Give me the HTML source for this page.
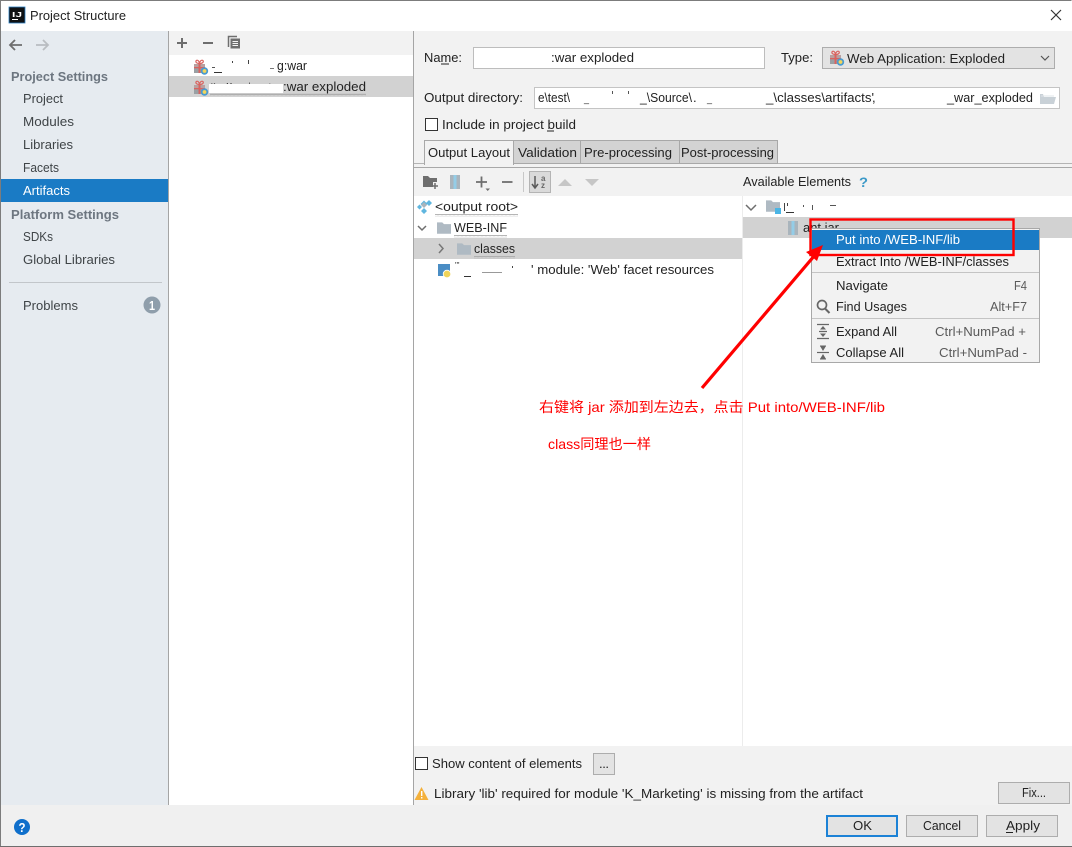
<!DOCTYPE html>
<html><head><meta charset="utf-8"><style>
html,body{margin:0;padding:0;background:#fff;width:1072px;height:847px;overflow:hidden}
svg{display:block}
text{font-family:"Liberation Sans","Noto Sans CJK SC",sans-serif;font-size:13px;fill:#222;white-space:pre}
.s{fill:#3f4447}
.h{fill:#6d7680;font-weight:bold}
.w{fill:#fff}
.k{fill:#5a5a5a}
.r{fill:#ff0000;font-size:14px}
</style></head><body>
<svg width="1072" height="847" viewBox="0 0 1072 847" xmlns="http://www.w3.org/2000/svg">
<defs>
<symbol id="gift" viewBox="0 0 16 16" overflow="visible">
<rect x="1" y="5" width="11" height="3" fill="#b9a0a0"/>
<rect x="1" y="8" width="11" height="6" fill="#9aa0a4"/>
<rect x="5.5" y="5" width="2" height="9" fill="#d9635f"/>
<rect x="1" y="8" width="11" height="1.3" fill="#d9635f"/>
<path d="M6.5 4.5C4 4.5 2.5 3.5 3 2S6 1 6.5 4.5C7 1 9.7.5 10.2 2S9 4.5 6.5 4.5Z" fill="none" stroke="#d9635f" stroke-width="1.2"/>
<circle cx="11.5" cy="12" r="3.7" fill="#4a9bd0"/>
<circle cx="11.5" cy="12" r="1.9" fill="#f2d55a"/>
</symbol>
<symbol id="folder" viewBox="0 0 16 13">
<path d="M0 0H6L8 2H16V13H0Z" fill="#afbac3"/>
</symbol>
<symbol id="jar" viewBox="0 0 10 14">
<rect width="10" height="14" fill="#a9b4bc"/>
<rect x="3.5" width="3" height="14" fill="#62b7de"/>
<path d="M3.5 1h3M3.5 3h3M3.5 5h3M3.5 7h3M3.5 9h3M3.5 11h3M3.5 13h3" stroke="#e8f2f6" stroke-width=".8"/>
</symbol>
<pattern id="wave" width="4" height="3" patternUnits="userSpaceOnUse">
<path d="M0 2L1 1L2 2L3 1L4 2" fill="none" stroke="#a8a8a8" stroke-width=".8"/>
</pattern>
</defs>

<!-- window -->
<rect width="1072" height="847" fill="#fff"/>
<rect x="1" y="31" width="167" height="775" fill="#e6ebf0"/>
<rect x="168" y="31" width="1" height="775" fill="#a5a5a5"/>
<rect x="169" y="31" width="244" height="24" fill="#f2f2f2"/>
<rect x="413" y="31" width="1" height="775" fill="#a5a5a5"/>
<rect x="414" y="31" width="658" height="775" fill="#f2f2f2"/>
<rect x="1" y="805" width="1071" height="41" fill="#f0f0f0"/>

<!-- title bar -->
<rect x="9" y="7" width="16" height="16" fill="#0f1113"/>
<rect x="9" y="7" width="16" height="16" fill="none" stroke="#2a7fc4" stroke-width=".8"/>
<text x="12" y="17" style="font-size:7px;font-weight:bold;fill:#fff" textLength="10" lengthAdjust="spacingAndGlyphs">IJ</text>
<rect x="12" y="19" width="6" height="1" fill="#fff"/>
<text x="30" y="20" textLength="96" lengthAdjust="spacingAndGlyphs">Project Structure</text>
<path d="M1051 10L1061 20M1061 10L1051 20" stroke="#333" stroke-width="1.2" fill="none"/>

<!-- nav arrows -->
<path d="M22 45H10M15 40L10 45L15 50" stroke="#6e6e6e" stroke-width="1.8" fill="none"/>
<path d="M36 45H48M43 40L48 45L43 50" stroke="#b9bdc1" stroke-width="1.8" fill="none"/>

<!-- sidebar -->
<text class="h" x="11" y="81" textLength="97" lengthAdjust="spacingAndGlyphs">Project Settings</text>
<text class="s" x="23" y="103" textLength="40" lengthAdjust="spacingAndGlyphs">Project</text>
<text class="s" x="23" y="126" textLength="51" lengthAdjust="spacingAndGlyphs">Modules</text>
<text class="s" x="23" y="149" textLength="50" lengthAdjust="spacingAndGlyphs">Libraries</text>
<text class="s" x="23" y="172" textLength="36" lengthAdjust="spacingAndGlyphs">Facets</text>
<rect x="1" y="179" width="167" height="23" fill="#1a7bc5"/>
<text class="w" x="23" y="195" textLength="47" lengthAdjust="spacingAndGlyphs">Artifacts</text>
<text class="h" x="11" y="219" textLength="108" lengthAdjust="spacingAndGlyphs">Platform Settings</text>
<text class="s" x="23" y="241" textLength="30" lengthAdjust="spacingAndGlyphs">SDKs</text>
<text class="s" x="23" y="264" textLength="92" lengthAdjust="spacingAndGlyphs">Global Libraries</text>
<rect x="9" y="282" width="153" height="1" fill="#c2c6ca"/>
<text class="s" x="23" y="310" textLength="55" lengthAdjust="spacingAndGlyphs">Problems</text>
<circle cx="152" cy="305" r="8.5" fill="#8f9eab"/>
<text class="w" x="149" y="310" style="font-weight:bold" textLength="6" lengthAdjust="spacingAndGlyphs">1</text>

<!-- artifact list toolbar -->
<path d="M177 43H187M182 38V48" stroke="#6e6e6e" stroke-width="2" fill="none"/>
<path d="M203 43H213" stroke="#6e6e6e" stroke-width="2" fill="none"/>
<path d="M228.500 47V36.500H237" stroke="#6e6e6e" stroke-width="1.500" fill="none"/>
<rect x="230.500" y="38.500" width="9.500" height="10" fill="#6e6e6e"/>
<path d="M232.500 41.500H238M232.500 43.500H238M232.500 45.500H238" stroke="#f2f2f2" stroke-width=".9"/>

<!-- artifact list -->
<rect x="169" y="76" width="244" height="21" fill="#d2d2d2"/>
<use href="#gift" x="193" y="59" width="16" height="16"/>
<use href="#gift" x="193" y="80" width="16" height="16"/>
<rect x="214" y="72" width="8" height="1" fill="#333"/>
<rect x="212" y="67" width="3" height="1" fill="#555"/>
<rect x="232" y="61" width="1" height="2" fill="#444"/>
<rect x="248" y="60" width="1" height="4" fill="#444"/>
<rect x="270" y="68" width="4" height="1" fill="#777"/>
<text x="277" y="70" textLength="30" lengthAdjust="spacingAndGlyphs">g:war</text>
<rect x="210" y="93" width="156" height="3" fill="url(#wave)"/>
<text x="211" y="88" style="font-size:7px" textLength="60" lengthAdjust="spacing">K M  k  t</text>
<rect x="209" y="84" width="74" height="9" fill="#fff"/>
<text x="283" y="91" textLength="83" lengthAdjust="spacingAndGlyphs">:war exploded</text>

<!-- form -->
<text x="424" y="62" textLength="38" lengthAdjust="spacingAndGlyphs">Name:</text>
<rect x="441" y="63.500" width="8" height="1" fill="#222"/>
<rect x="473.500" y="47.500" width="291" height="21" fill="#fff" stroke="#bdbdbd"/>
<text x="551" y="62" textLength="83" lengthAdjust="spacingAndGlyphs">:war exploded</text>
<text x="781" y="62" textLength="32" lengthAdjust="spacingAndGlyphs">Type:</text>
<rect x="822.500" y="47.500" width="232" height="21" fill="#e3e3e3" stroke="#adadad"/>
<use href="#gift" x="829" y="50" width="16" height="16"/>
<text x="847" y="63" textLength="158" lengthAdjust="spacingAndGlyphs">Web Application: Exploded</text>
<path d="M1041 56L1045 60L1049 56" stroke="#555" stroke-width="1.200" fill="none"/>

<text x="424" y="102" textLength="99" lengthAdjust="spacingAndGlyphs">Output directory:</text>
<rect x="534.500" y="87.500" width="525" height="21" fill="#fff" stroke="#c4c4c4"/>
<text x="538" y="102" textLength="32" lengthAdjust="spacingAndGlyphs">e\test\</text>
<text x="584" y="102" style="font-size:9px">_</text>
<rect x="612" y="91" width="1" height="3" fill="#555"/>
<rect x="628" y="91" width="1" height="3" fill="#555"/>
<text x="640" y="102" textLength="52" lengthAdjust="spacingAndGlyphs">_\Source\</text>
<text x="693" y="102">.</text>
<text x="707" y="102" style="font-size:9px">_</text>
<text x="766" y="102" textLength="108" lengthAdjust="spacingAndGlyphs">_\classes\artifacts'</text>
<text x="872" y="102">,</text>
<text x="947" y="102" textLength="86" lengthAdjust="spacingAndGlyphs">_war_exploded</text>
<path d="M1040 94V104H1054L1056 97H1044L1043 94Z" fill="#c9d1d7"/>
<path d="M1041 96H1054" stroke="#dfe4e8"/>

<rect x="425.500" y="118.500" width="12" height="12" fill="#fff" stroke="#333"/>
<text x="442" y="129" textLength="134" lengthAdjust="spacingAndGlyphs">Include in project build</text>
<rect x="547" y="130.500" width="7" height="1" fill="#222"/>

<!-- tabs -->
<rect x="414" y="163" width="658" height="1" fill="#b4b4b4"/>
<rect x="510" y="140.500" width="267.500" height="23" fill="#d3d3d3" stroke="#a8a8a8"/>
<path d="M580.500 140V163M679.500 140V163" stroke="#a8a8a8"/>
<rect x="424.500" y="140.500" width="89" height="24" fill="#f2f2f2" stroke="#a8a8a8"/>
<rect x="425" y="163" width="88" height="3" fill="#f2f2f2"/>
<text x="428" y="157" textLength="82" lengthAdjust="spacingAndGlyphs">Output Layout</text>
<text x="518" y="157" textLength="59" lengthAdjust="spacingAndGlyphs">Validation</text>
<text x="584" y="157" textLength="88" lengthAdjust="spacingAndGlyphs">Pre-processing</text>
<text x="681" y="157" textLength="93" lengthAdjust="spacingAndGlyphs">Post-processing</text>
<rect x="414" y="167" width="658" height="1" fill="#a8a8a8"/>

<!-- layout toolbar -->
<path d="M423 176H428L430 178H437V182H433V187H423Z" fill="#6e6e6e"/>
<path d="M435 183V189M432 186H438" stroke="#6e6e6e" stroke-width="1.500"/>
<use href="#jar" x="450" y="175" width="10" height="14"/>
<path d="M476 182H487M481.500 176.500V187.500" stroke="#6e6e6e" stroke-width="1.800"/>
<path d="M485.500 188.500H490L487.700 191Z" fill="#6e6e6e"/>
<path d="M502 182H512.500" stroke="#6e6e6e" stroke-width="1.800"/>
<rect x="523" y="172" width="1" height="20" fill="#c8c8c8"/>
<rect x="529.500" y="171.500" width="21" height="21" fill="#dadada" stroke="#b4b4b4"/>
<path d="M535 176V187M532 184L535 188L538 184" stroke="#5a5a5a" stroke-width="1.500" fill="none"/>
<text x="541" y="181" style="font-size:8px;font-weight:bold;fill:#666">a</text>
<text x="541" y="188" style="font-size:8px;font-weight:bold;fill:#666">z</text>
<path d="M558 186L565 179L572 186Z" fill="#c6c6c6"/>
<path d="M585 179L592 186L599 179Z" fill="#c6c6c6"/>

<text x="743" y="186" textLength="108" lengthAdjust="spacingAndGlyphs">Available Elements</text>
<text x="859" y="187" style="font-size:14px;font-weight:bold;fill:#3d9ac8" textLength="9" lengthAdjust="spacingAndGlyphs">?</text>

<!-- trees -->
<rect x="414" y="196" width="658" height="550" fill="#fff"/>
<rect x="742" y="196" width="1" height="550" fill="#ececec"/>
<rect x="414" y="238" width="328" height="21" fill="#d2d2d2"/>
<rect x="743" y="217" width="329" height="21" fill="#d2d2d2"/>

<path d="M424 200.500L427.500 204L424 207.500L420.500 204ZM429 200L432 203L429 206L426 203Z" fill="#5fb6df"/>
<path d="M424 208L427 211L424 214L421 211ZM419.500 204.500L422 207L419.500 209.500L417 207Z" fill="#5fb6df"/>
<path d="M424 202L427 205L424 208L421 205Z" fill="#aab4bb"/>
<text x="435" y="211" textLength="83" lengthAdjust="spacingAndGlyphs">&lt;output root&gt;</text>
<rect x="435" y="214" width="83" height="3" fill="url(#wave)"/>

<path d="M418 226L422 230L426 226" stroke="#6e6e6e" stroke-width="1.500" fill="none"/>
<use href="#folder" x="437" y="222" width="14" height="12"/>
<text x="454" y="232" textLength="53" lengthAdjust="spacingAndGlyphs">WEB-INF</text>
<rect x="454" y="235" width="53" height="3" fill="url(#wave)"/>

<path d="M439 244L443 248.500L439 253" stroke="#777" stroke-width="1.500" fill="none"/>
<use href="#folder" x="457" y="243" width="14" height="12"/>
<text x="474" y="253" textLength="41" lengthAdjust="spacingAndGlyphs">classes</text>
<rect x="474" y="256" width="41" height="3" fill="url(#wave)"/>

<rect x="438" y="264" width="12" height="12" fill="#4a8dc4"/>
<path d="M442 264H450V276H444Z" fill="#4a8dc4"/>
<circle cx="447" cy="274" r="3.800" fill="#f0d45a" stroke="#fff" stroke-width=".8"/>
<text x="455" y="268" style="font-size:8px">'''</text>
<rect x="464" y="276" width="7" height="1" fill="#333"/>
<rect x="482" y="272" width="20" height="1" fill="#999"/>
<rect x="512" y="266" width="1" height="2" fill="#444"/>
<text x="531" y="274" textLength="183" lengthAdjust="spacingAndGlyphs">' module: 'Web' facet resources</text>

<path d="M746 205L751 210L756 205" stroke="#6e6e6e" stroke-width="1.500" fill="none"/>
<use href="#folder" x="766" y="200" width="14" height="12"/>
<rect x="775" y="208" width="6" height="6" fill="#4ab5e5"/>
<rect x="784" y="203" width="1" height="8" fill="#444"/>
<rect x="787" y="203" width="1" height="3" fill="#444"/>
<rect x="786" y="212" width="8" height="1" fill="#333"/>
<rect x="803" y="205" width="1" height="2" fill="#555"/>
<rect x="812" y="205" width="1" height="5" fill="#555"/>
<rect x="830" y="205" width="6" height="1" fill="#555"/>
<use href="#jar" x="788" y="221" width="10" height="14"/>
<text x="803" y="232" textLength="36" lengthAdjust="spacingAndGlyphs">ant.jar</text>

<!-- bottom -->
<rect x="415.500" y="757.500" width="12" height="12" fill="#fff" stroke="#333"/>
<text x="432" y="768" textLength="150" lengthAdjust="spacingAndGlyphs">Show content of elements</text>
<rect x="593.500" y="753.500" width="21" height="21" fill="#e3e3e3" stroke="#adadad"/>
<text x="599" y="768" textLength="10" lengthAdjust="spacing">...</text>
<path d="M421.500 787L428.500 800H414.500Z" fill="#f4b13c"/>
<rect x="421" y="791" width="1.400" height="5" fill="#fff"/>
<rect x="421" y="797" width="1.400" height="1.500" fill="#fff"/>
<text x="434" y="798" textLength="429" lengthAdjust="spacingAndGlyphs">Library 'lib' required for module 'K_Marketing' is missing from the artifact</text>
<rect x="998.500" y="782.500" width="71" height="21" fill="#e3e3e3" stroke="#adadad"/>
<text x="1022" y="797" textLength="24" lengthAdjust="spacingAndGlyphs">Fix...</text>

<circle cx="22" cy="827" r="8" fill="#0f6fcb"/>
<text x="18.500" y="832" style="font-weight:bold;fill:#fff" textLength="7" lengthAdjust="spacingAndGlyphs">?</text>

<rect x="827" y="816" width="70" height="20" fill="#e3e3e3" stroke="#1c82d6" stroke-width="2"/>
<text x="853" y="830" textLength="19" lengthAdjust="spacingAndGlyphs">OK</text>
<rect x="906.500" y="815.500" width="71" height="21" fill="#e3e3e3" stroke="#adadad"/>
<text x="923" y="830" textLength="38" lengthAdjust="spacingAndGlyphs">Cancel</text>
<rect x="986.500" y="815.500" width="71" height="21" fill="#e3e3e3" stroke="#adadad"/>
<text x="1006" y="830" textLength="34" lengthAdjust="spacingAndGlyphs">Apply</text>
<rect x="1006" y="832" width="7" height="1" fill="#222"/>

<!-- context menu -->
<rect x="811.500" y="228.500" width="228" height="134" fill="#f2f2f2" stroke="#a8a8a8"/>
<rect x="812" y="230" width="227" height="20" fill="#1a7bc5"/>
<text class="w" x="836" y="244" textLength="124" lengthAdjust="spacingAndGlyphs">Put into /WEB-INF/lib</text>
<text x="836" y="266" textLength="173" lengthAdjust="spacingAndGlyphs">Extract Into /WEB-INF/classes</text>
<rect x="812" y="272" width="227" height="1" fill="#c4c4c4"/>
<text x="836" y="290" textLength="52" lengthAdjust="spacingAndGlyphs">Navigate</text>
<text class="k" x="1014" y="290" textLength="13" lengthAdjust="spacingAndGlyphs">F4</text>
<circle cx="822" cy="305" r="4.500" fill="none" stroke="#666" stroke-width="1.700"/>
<path d="M825 308.500L829.500 313" stroke="#666" stroke-width="2"/>
<text x="836" y="311" textLength="71" lengthAdjust="spacingAndGlyphs">Find Usages</text>
<text class="k" x="990" y="311" textLength="37" lengthAdjust="spacingAndGlyphs">Alt+F7</text>
<rect x="812" y="318" width="227" height="1" fill="#c4c4c4"/>
<path d="M817 324.500H829M817 338.500H829M819 331.500H827" stroke="#666" stroke-width="1.200"/>
<path d="M823 326L820 329.500H826ZM823 337L820 333.500H826Z" fill="#666"/>
<text x="836" y="336" textLength="61" lengthAdjust="spacingAndGlyphs">Expand All</text>
<text class="k" x="935" y="336" textLength="91" lengthAdjust="spacingAndGlyphs">Ctrl+NumPad +</text>
<path d="M817 352.500H829" stroke="#666" stroke-width="1.200"/>
<path d="M823 351L820 346H826ZM823 354L820 359H826Z" fill="#666"/>
<path d="M820 346H826M820 359H826" stroke="#666"/>
<text x="836" y="357" textLength="68" lengthAdjust="spacingAndGlyphs">Collapse All</text>
<text class="k" x="939" y="357" textLength="88" lengthAdjust="spacingAndGlyphs">Ctrl+NumPad -</text>

<!-- annotations -->
<rect x="810.500" y="219.500" width="203" height="35.500" fill="none" stroke="#ff0000" stroke-width="2.400"/>
<path d="M702 388L815 255" stroke="#ff0000" stroke-width="3.200" fill="none"/>
<path d="M823 245L817 261L806 252Z" fill="#ff0000"/>
<text class="r" x="539" y="412" textLength="346" lengthAdjust="spacingAndGlyphs">右键将 jar 添加到左边去，点击 Put into/WEB-INF/lib</text>
<text class="r" x="548" y="449" textLength="103" lengthAdjust="spacingAndGlyphs">class同理也一样</text>

<!-- window border -->
<path d="M.5 847V.5H1071.500" fill="none" stroke="#7c7c7c"/>
<rect x="0" y="846" width="1072" height="1" fill="#6e6e6e"/>
</svg>
</body></html>
